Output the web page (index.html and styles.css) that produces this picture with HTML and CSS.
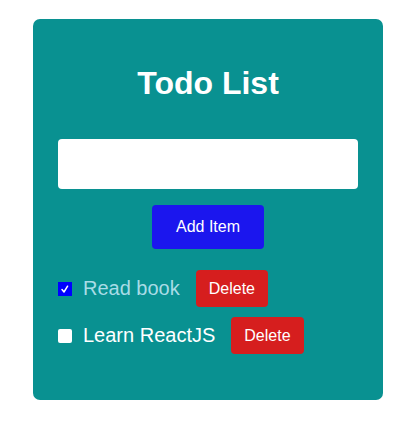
FILE: index.html
```html
<!DOCTYPE html>
<html>
<head>
<meta charset="utf-8">
<link rel="stylesheet" href="styles.css">
</head>
<body>
<div class="page">
  <div class="card">
    <h1 class="title">Todo List</h1>
    <input class="field" type="text">
    <button class="add-btn">Add Item</button>
    <ul class="list">
      <li class="item">
        <input class="check" type="checkbox" checked>
        <span class="label done">Read book</span>
        <button class="del-btn">Delete</button>
      </li>
      <li class="item">
        <input class="check" type="checkbox">
        <span class="label">Learn ReactJS</span>
        <button class="del-btn">Delete</button>
      </li>
    </ul>
  </div>
</div>
</body>
</html>
```
FILE: styles.css
```css
body {
  margin: 0;
  font-family: "Liberation Sans", Arial, sans-serif;
}
.page {
  padding: 19px 0 0 33px;
}
.card {
  width: 350px;
  height: 381px;
  box-sizing: border-box;
  background: #099191;
  border-radius: 7px;
  padding: 46px 25px 0 25px;
  display: flex;
  flex-direction: column;
}
.title {
  margin: 0;
  text-align: center;
  color: #fff;
  font-size: 32px;
  font-weight: bold;
  line-height: 37px;
}
.field {
  margin-top: 37px;
  width: 300px;
  height: 50px;
  box-sizing: border-box;
  border: none;
  border-radius: 4px;
  background: #fff;
  padding: 0 10px;
  outline: none;
}
.add-btn {
  align-self: center;
  margin-top: 16px;
  width: 112px;
  height: 44px;
  border: none;
  border-radius: 4px;
  background: #1b16ee;
  color: #fff;
  font-family: "Liberation Sans", Arial, sans-serif;
  font-size: 16px;
}
.list {
  list-style: none;
  margin: 21px 0 0 0;
  padding: 0;
  display: flex;
  flex-direction: column;
  gap: 10px;
}
.item {
  display: flex;
  align-items: center;
  height: 37px;
}
.check {
  -webkit-appearance: none;
  appearance: none;
  margin: 0;
  width: 14px;
  height: 14px;
  border-radius: 2px;
  background: #fff;
}
.check:checked {
  border-radius: 0;
  background: #0000ff url("data:image/svg+xml,%3Csvg xmlns='http://www.w3.org/2000/svg' width='14' height='14' viewBox='0 0 14 14'%3E%3Cpath d='M4 7.6 L6 10 L9.6 4.2' fill='none' stroke='white' stroke-width='1.5' stroke-linecap='round' stroke-linejoin='round'/%3E%3C/svg%3E") center / 14px 14px no-repeat;
}
.label {
  margin-left: 11px;
  font-size: 20px;
  color: #fff;
}
.label.done {
  color: #a8dce6;
}
.del-btn {
  margin-left: 16px;
  height: 37px;
  padding: 0 13px;
  border: none;
  border-radius: 4px;
  background: #d61e1e;
  color: #fff;
  font-family: "Liberation Sans", Arial, sans-serif;
  font-size: 16px;
}
```
